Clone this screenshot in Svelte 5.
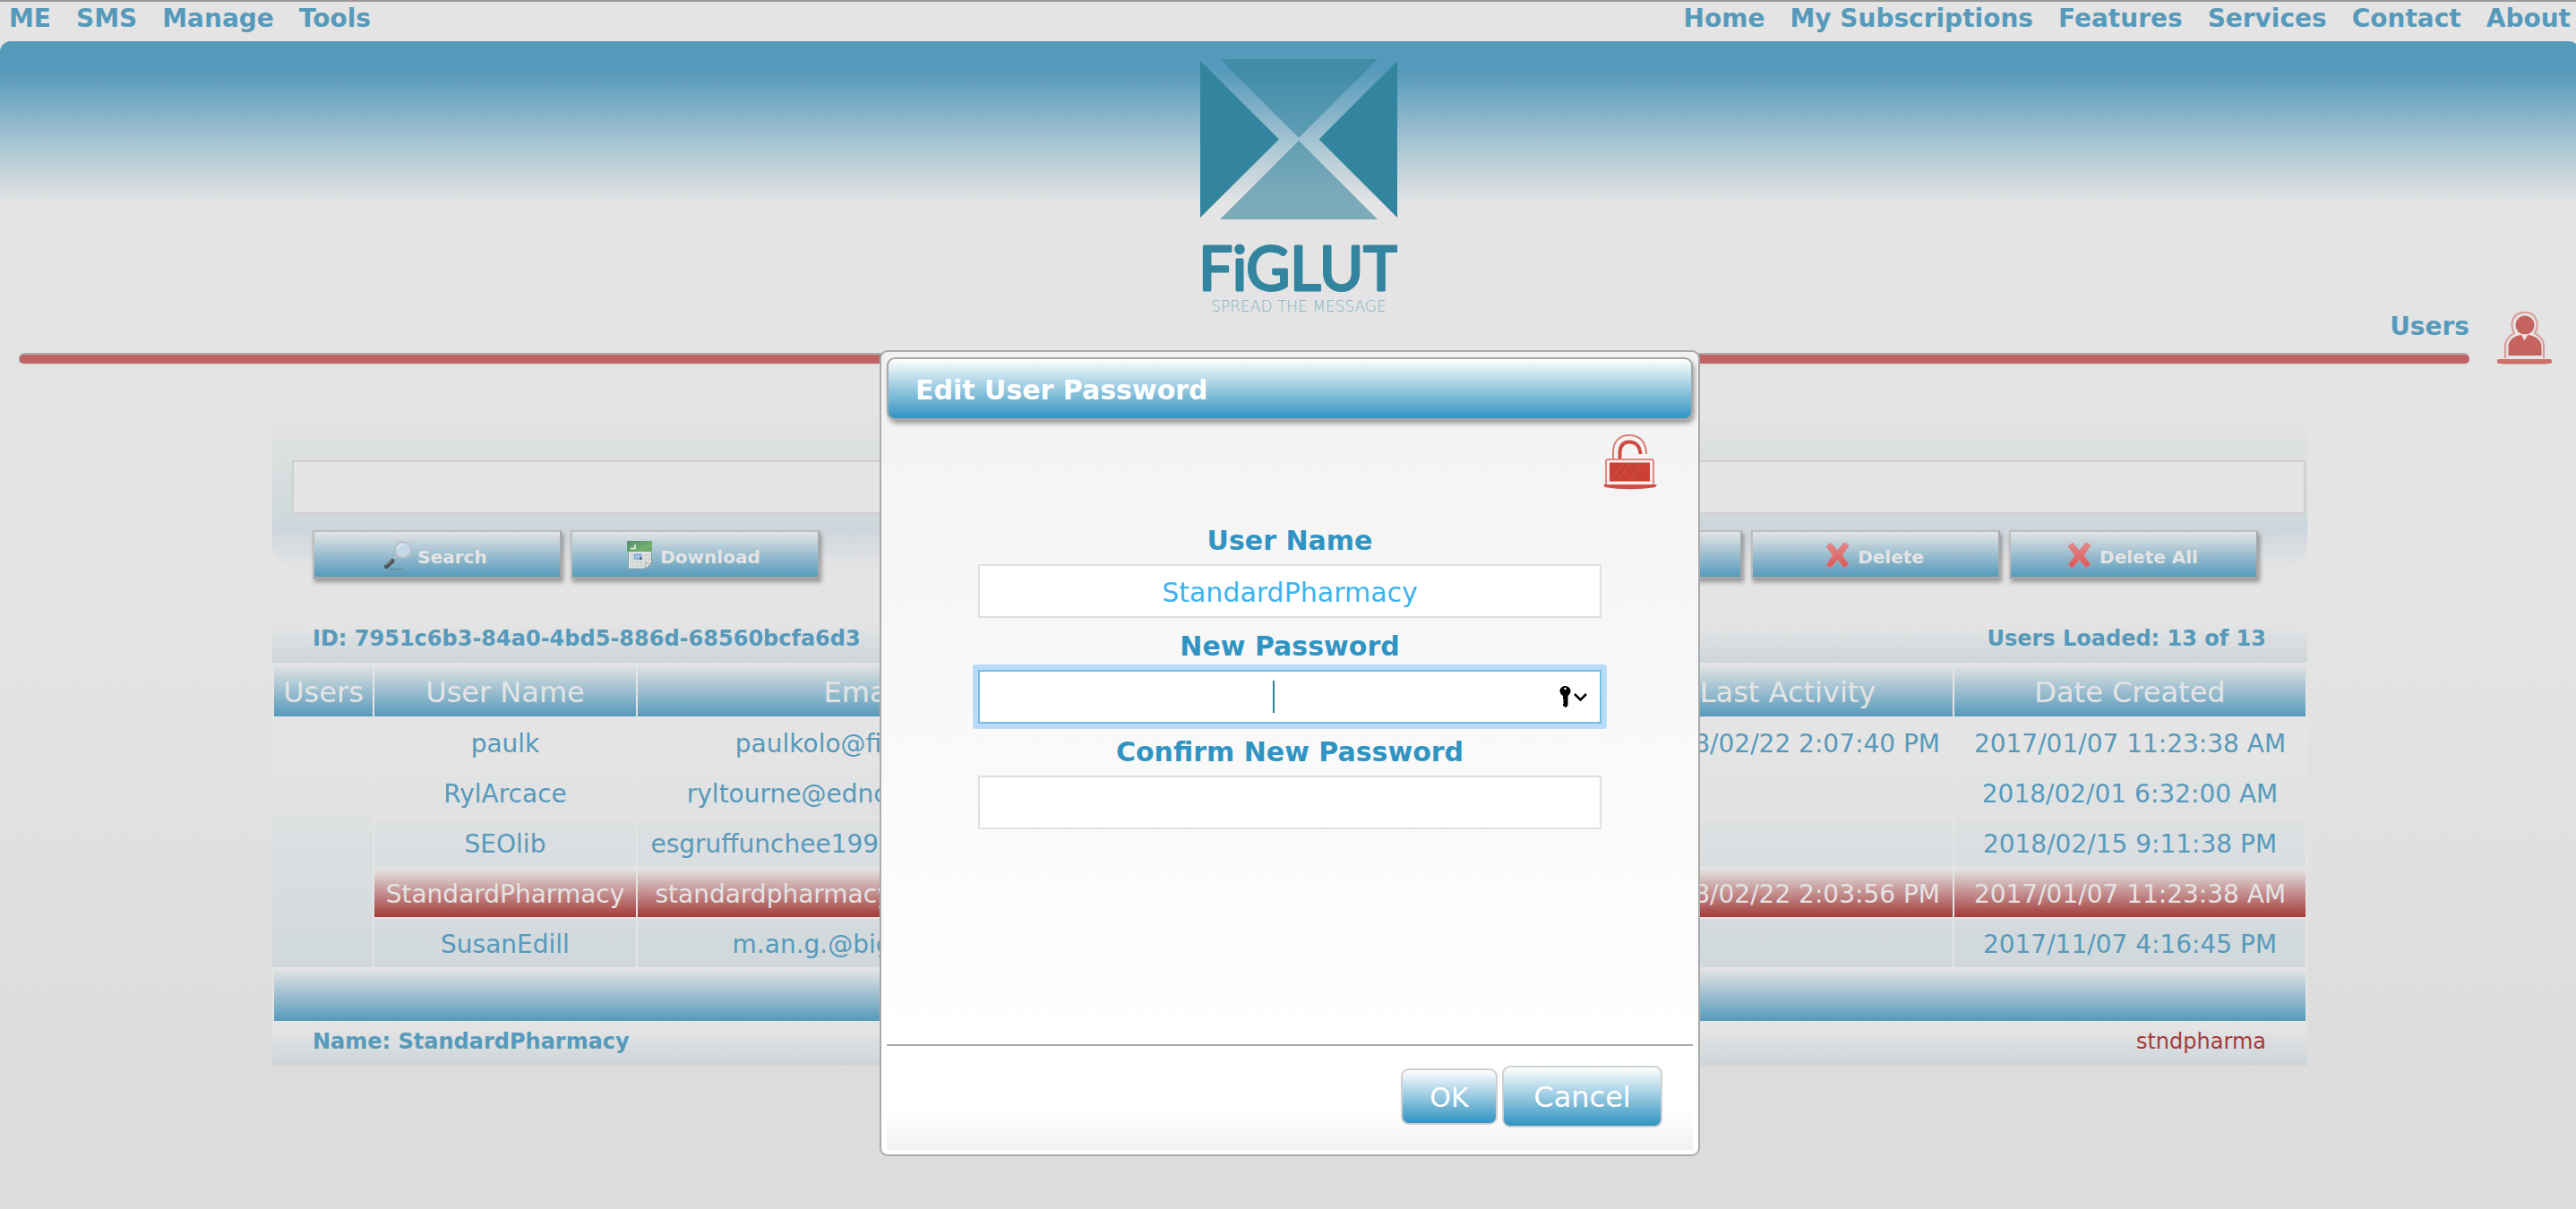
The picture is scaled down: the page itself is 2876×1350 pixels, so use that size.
<script>
  const leftLinks = ['ME', 'SMS', 'Manage', 'Tools'];
  const rightLinks = ['Home', 'My Subscriptions', 'Features', 'Services', 'Contact', 'About'];
  const rows = [
    { name: 'paulk', email: 'paulkolo@figlut.com', last: '2018/02/22 2:07:40 PM', created: '2017/01/07 11:23:38 AM' },
    { name: 'RylArcace', email: 'ryltourne@ednc-emails.com', last: '', created: '2018/02/01 6:32:00 AM' },
    { name: 'SEOlib', email: 'esgruffunchee1990@hotmail.com', last: '', created: '2018/02/15 9:11:38 PM' },
    { name: 'StandardPharmacy', email: 'standardpharmacy@outlook.com', last: '2018/02/22 2:03:56 PM', created: '2017/01/07 11:23:38 AM', selected: true },
    { name: 'SusanEdill', email: 'm.an.g.@bigmail.net', last: '', created: '2017/11/07 4:16:45 PM' }
  ];
  let userName = $state('StandardPharmacy');
  let password = $state('');
  let confirmation = $state('');
</script>

{#snippet cross()}
  <svg class="icon" viewBox="0 0 32 32" aria-hidden="true">
    <defs>
      <linearGradient id="crossFill" x1="0" y1="0" x2="0" y2="1">
        <stop offset="0" stop-color="#e58888" />
        <stop offset="1" stop-color="#d95757" />
      </linearGradient>
    </defs>
    <path d="M3 6 L8 2.5 L15.500 11 L23 2 L28 5 L20.500 16 L28 26 L23 30 L15.500 21 L8 30 L3 27 L10.500 16 Z" fill="url(#crossFill)" stroke="#d98080" stroke-linejoin="round" />
  </svg>
{/snippet}

<div class="page">
  <nav class="menu">
    <div class="links">
      {#each leftLinks as link}<a href="#{link}">{link}</a>{/each}
    </div>
    <div class="links">
      {#each rightLinks as link}<a href="#{link}">{link}</a>{/each}
    </div>
  </nav>

  <header class="banner">
    <svg class="logo" viewBox="0 0 220 292" role="img" aria-label="FiGLUT, spread the message">
      <defs>
        <linearGradient id="top" x1="0" y1="0" x2="0" y2="1">
          <stop offset="0.150" stop-color="#418ca9" />
          <stop offset="1" stop-color="#609eb4" />
        </linearGradient>
        <linearGradient id="bottom" x1="0" y1="0" x2="0" y2="1">
          <stop offset="0" stop-color="#609eb2" />
          <stop offset="0.600" stop-color="#79a9ba" />
          <stop offset="1" stop-color="#7caab9" />
        </linearGradient>
      </defs>
      <path d="M0 2 L88 89.500 L0 177 Z M220 2 L132.500 89.500 L220 177 Z" fill="#33859f" />
      <path d="M22 0 H198 L110 88 Z" fill="url(#top)" />
      <path d="M110 91 L198 179 H22 Z" fill="url(#bottom)" />
      <text class="brand" x="110" y="258" text-anchor="middle">FiGLUT</text>
      <text class="tagline" x="110" y="282" text-anchor="middle">SPREAD THE MESSAGE</text>
    </svg>
    <div class="heading">
      <div class="heading-text">
        <h1>Users</h1>
        <div class="rule"></div>
      </div>
      <svg class="person" viewBox="0 0 61 60" aria-hidden="true">
        <path d="M9 52 V38 C9 31 14 27 19 24 C15 17 16 10 19 6 C25 -1 37 -1 42 6 C46 12 45 19 42 24 C48 28 52 31 52 38 V52" fill="none" stroke="#d59a96" stroke-width="2" />
        <circle cx="31" cy="15" r="10.500" fill="#c5645e" />
        <path d="M12.500 49 V39 C13 31 19 27 27 26 L30.500 32 L34 26 C43 27 49 31 49.500 39 V49 Z" fill="#c5645e" />
        <path d="M27 26 L29 25 H33 L34 26 L30.500 32 Z" fill="#eadada" />
        <rect x="0" y="53" width="61" height="5" rx="2" fill="#cb706b" />
        <path d="M6 58.500 H55" stroke="#d9a4a1" />
      </svg>
    </div>
  </header>

  <main>
    <section class="search-panel">
      <input class="search" type="text" aria-label="Search users" />
      <div class="actions">
        <div class="group">
          <button class="action">
            <svg class="icon" viewBox="0 0 32 32" aria-hidden="true">
              <path d="M6 31.500 H22" stroke="#5e8797" />
              <path d="M13 19 L16 16" stroke="#b8bcc0" stroke-width="3" />
              <path d="M3.500 28.500 L10 22.500" stroke="#4c5358" stroke-width="5" stroke-linecap="round" />
              <path d="M3 27 L9 21.500" stroke="#8b8f92" stroke-width="1.500" />
              <circle cx="22" cy="10" r="9" fill="#c5d6e5" stroke="#b4bec6" stroke-width="1.500" />
              <path d="M16 9 C17 5 20 4 23 4" fill="none" stroke="#e2eaf0" stroke-width="2" />
            </svg>
            <span>Search</span>
          </button>
          <button class="action">
            <svg class="icon" viewBox="0 0 32 32" aria-hidden="true">
              <defs>
                <linearGradient id="sheet" x1="0" y1="0" x2="1" y2="1">
                  <stop offset="0" stop-color="#4f8d70" />
                  <stop offset="0.700" stop-color="#74b069" />
                  <stop offset="1" stop-color="#6da667" />
                </linearGradient>
              </defs>
              <path d="M2.500 2 H28.500 V25 L22 31 H2.500 Z" fill="#e2e3e3" stroke="#7f9ca5" />
              <rect x="1" y="0" width="28" height="12" fill="url(#sheet)" />
              <path d="M5 8.500 H10 V4" fill="none" stroke="#d5e2d8" stroke-width="2" />
              <path d="M5 16 H27 M5 20 H27 M5 24 H23 M5 28 H20 M7 14 V29 M12 14 V29 M17 14 V29 M22 14 V27 M26 14 V22" stroke="#c6cacb" />
              <rect x="9.500" y="15" width="7" height="5" fill="#a9c5e8" stroke="#7ba6de" stroke-width="1.500" />
              <path d="M15 18 H18 V21 H15 Z" fill="#59708f" />
              <path d="M21.500 31 L22 25 H28.500 Z" fill="#efefef" stroke="#949ea2" />
            </svg>
            <span>Download</span>
          </button>
        </div>
        <div class="group">
          <button class="action" aria-label="Edit"></button>
          <button class="action">{@render cross()}<span>Delete</span></button>
          <button class="action">{@render cross()}<span>Delete All</span></button>
        </div>
      </div>
    </section>

    <div class="info">
      <strong>ID: 7951c6b3-84a0-4bd5-886d-68560bcfa6d3</strong>
      <strong>Users Loaded: 13 of 13</strong>
    </div>

    <table>
      <colgroup>
        <col class="c-group" /><col class="c-name" /><col class="c-email" /><col /><col class="c-last" /><col class="c-created" />
      </colgroup>
      <thead>
        <tr>
          <th>Users</th><th>User Name</th><th>Email</th><th></th><th>Last Activity</th><th>Date Created</th>
        </tr>
      </thead>
      <tbody>
        {#each rows as row, i}
          <tr class:selected={row.selected}>
            {#if i === 0}<td class="side" rowspan={rows.length}></td>{/if}
            <td>{row.name}</td><td>{row.email}</td><td></td><td class="last">{row.last}</td><td>{row.created}</td>
          </tr>
        {/each}
      </tbody>
      <tfoot>
        <tr><td colspan="6"></td></tr>
      </tfoot>
    </table>

    <div class="info">
      <strong>Name: StandardPharmacy</strong>
      <span class="alias">stndpharma</span>
    </div>
  </main>

  <div class="layer">
    <div class="dialog" role="dialog" aria-labelledby="dialog-title">
      <h2 id="dialog-title">Edit User Password</h2>
      <svg class="lock" viewBox="0 0 60 62" aria-hidden="true">
        <path d="M11 28 V20 C11 7 19 1 29 1 C40 1 48 8 48 22" fill="none" stroke="#d97f78" stroke-width="2" />
        <path d="M18.500 28 V20 C19 12 23 8.500 29 8.500 C36 8.500 41 13 41.500 22" fill="none" stroke="#cf4c43" stroke-width="4" />
        <rect x="3" y="28" width="53" height="29" rx="2" fill="#fbeeed" stroke="#dd8983" stroke-width="2" />
        <rect x="7" y="31.500" width="45" height="21" fill="#cb4036" />
        <path d="M9 51 L22 33 M16 51 L30 33 M30 51 L42 35" stroke="#d2554c" />
        <path d="M0 56 H60 L58 59 C40 62 20 62 2 59 Z" fill="#cf4f47" />
      </svg>
      <form class="fields" onsubmit={(e) => e.preventDefault()}>
        <div class="field">
          <label for="user">User Name</label>
          <input id="user" type="text" bind:value={userName} />
        </div>
        <div class="field">
          <label for="new">New Password</label>
          <div class="focused">
            <input id="new" type="password" bind:value={password} />
            <span class="caret"></span>
            <svg class="key" viewBox="0 0 32 26" aria-hidden="true">
              <path d="M6.500 1 C10 1 12.500 3.500 12.500 6.500 C12.500 9 11 11 9.500 12 V23 L7 25 L4 23 V21 L5 20 L4 18.500 L5 17 L4 15.500 V12 C2 11 0.500 9 0.500 6.500 C0.500 3.500 3 1 6.500 1 Z" />
              <circle cx="6.500" cy="4" r="1.300" fill="#fff" />
              <path d="M17 10 L23.500 16.500 L30 10" fill="none" stroke="#000" stroke-width="2.500" />
            </svg>
          </div>
        </div>
        <div class="field">
          <label for="confirm">Confirm New Password</label>
          <input id="confirm" type="password" bind:value={confirmation} />
        </div>
      </form>
      <footer>
        <button class="ok">OK</button>
        <button class="cancel">Cancel</button>
      </footer>
    </div>
  </div>
</div>

<style>
  :global(body) {
    overflow-x: hidden;
  }
  * {
    box-sizing: border-box;
  }
  .page {
    position: relative;
    min-height: 100vh;
    margin-right: -4px;
    padding-bottom: 40px;
    background: linear-gradient(#e4e4e4 50%, #dcdcdc 90%);
    color: #569abb;
    font-family: Verdana, 'DejaVu Sans', sans-serif;
    font-size: 28px;
  }
  button,
  input {
    font-family: inherit;
  }
  .menu {
    display: flex;
    justify-content: space-between;
    padding: 0 10px 6px;
    border-top: 2px solid #999;
    font-weight: bold;
    line-height: 38px;
  }
  .links {
    display: flex;
    gap: 28px;
  }
  .links a {
    color: inherit;
    text-decoration: none;
  }
  .banner {
    padding: 20px 31px 0 21px;
    border-radius: 12px 12px 0 0;
    background: linear-gradient(#569abb 0, #569abb 33px, #82b1c8 78px, #abc7d3 118px, #e4e4e4 180px);
  }
  .logo {
    display: block;
    width: 220px;
    height: 292px;
    margin: 0 auto;
    transform: translateX(15px);
  }
  .brand {
    font-family: Lato, sans-serif;
    font-size: 67px;
    fill: #33859f;
    stroke: #33859f;
    stroke-width: 3px;
    stroke-linejoin: round;
  }
  .tagline {
    font-family: 'DejaVu Sans', sans-serif;
    font-size: 17px;
    font-weight: 200;
    fill: #86b3c3;
  }
  .heading {
    display: flex;
    align-items: flex-end;
    gap: 31px;
    margin-top: -12px;
  }
  .heading-text {
    flex: 1;
  }
  h1 {
    margin: 0 0 10px;
    font-size: 28px;
    line-height: 38px;
    text-align: right;
  }
  .rule {
    height: 14px;
    border: solid #adadad;
    border-width: 2px 0 0 1px;
    border-bottom: 2px solid #dcdcdc;
    border-radius: 6px;
    background: #c16365;
  }
  .person {
    width: 61px;
    height: 60px;
  }
  main {
    width: 94%;
    max-width: 2272px;
    margin: 52px auto 0;
  }
  .search-panel {
    height: 174px;
    margin-bottom: 56px;
    padding-top: 54px;
    border-radius: 24px;
    background: linear-gradient(#e4e4e4, #cfd8da 68%, #cdd5dc 74%, #e4e4e4);
  }
  .search {
    display: block;
    width: calc(100% - 24px);
    height: 60px;
    margin: 0 2px 18px 22px;
    border: 2px solid #cfcfcf;
    background: #e4e4e4;
  }
  .actions {
    display: flex;
    justify-content: space-between;
    padding: 0 55px 0 45px;
  }
  .group {
    display: flex;
    gap: 10px;
  }
  .action {
    display: flex;
    justify-content: center;
    align-items: flex-end;
    gap: 6px;
    width: 278px;
    height: 54px;
    padding: 0 4px 8px 0;
    border: 2px solid;
    border-color: #bebebe #a8a8a8 #a8a8a8 #bebebe;
    background: linear-gradient(#e4e4e4, #569abb);
    box-shadow: 2px 4px 5px rgb(0 0 0 / 35%);
    color: #e4e4e4;
    font-size: 20px;
    font-weight: bold;
    line-height: 28px;
  }
  .icon {
    width: 32px;
    height: 32px;
  }
  .info {
    display: flex;
    justify-content: space-between;
    padding: 0 46px 4px 45px;
    background: linear-gradient(#e4e4e4 15%, #cdd5da);
    font-size: 24px;
    line-height: 46px;
  }
  .alias {
    color: #a53a3a;
  }
  table {
    width: 100%;
    table-layout: fixed;
    border-spacing: 0;
  }
  .c-group {
    width: 112px;
  }
  .c-name {
    width: 294px;
  }
  .c-email {
    width: 506px;
  }
  .c-last {
    width: 370px;
  }
  .c-created {
    width: 396px;
  }
  th,
  td {
    height: 56px;
    padding: 3px 0 0;
    border: 0 solid #e4e4e4;
    border-width: 2px 0 0 2px;
    text-align: center;
    line-height: 36px;
    white-space: nowrap;
  }
  th:last-child,
  td:last-child {
    border-right-width: 2px;
  }
  th {
    height: 60px;
    background: linear-gradient(#e4e4e4, #569abb);
    color: #e4e4e4;
    font-size: 32px;
    font-weight: normal;
  }
  tbody {
    background: linear-gradient(#e4e4e4 15%, #d0d8dc);
  }
  td.side {
    border-color: transparent;
  }
  td.last {
    padding-right: 14px;
    text-align: right;
  }
  .selected td {
    background: linear-gradient(#e4e4e4, #a53a3a);
    color: #e4e4e4;
  }
  tfoot td {
    height: 60px;
    background: linear-gradient(#e4e4e4, #569abb);
  }
  .layer {
    position: absolute;
    inset: 391px 0 auto;
    display: flex;
    justify-content: center;
  }
  .dialog {
    display: flex;
    flex-direction: column;
    width: 916px;
    min-height: 900px;
    padding: 6px 6px 5px;
    border: 2px solid #aaa;
    border-radius: 9px;
    background: linear-gradient(#f2f2f2, #fff 88%);
    color: #3094c2;
  }
  h2 {
    margin: 0;
    padding: 3px 30px 0;
    border: 2px solid #a8a8a8;
    border-radius: 9px;
    background: linear-gradient(#fff, #3094c2);
    box-shadow: 2px 4px 5px rgb(0 0 0 / 35%);
    color: #fff;
    font-size: 30px;
    line-height: 63px;
  }
  .lock {
    align-self: flex-end;
    width: 60px;
    height: 62px;
    margin: 16px 40px 37px 0;
  }
  .fields {
    display: flex;
    flex-direction: column;
    gap: 12px;
    padding: 0 102px;
  }
  .field {
    display: flex;
    flex-direction: column;
    gap: 6px;
  }
  label {
    font-size: 30px;
    font-weight: bold;
    line-height: 40px;
    text-align: center;
  }
  .field input {
    display: block;
    width: 100%;
    height: 60px;
    padding: 2px 0 0;
    border: 2px solid #e0e0e0;
    background: #fff;
    color: #3db4ec;
    font-size: 30px;
    text-align: center;
    outline: none;
  }
  .focused {
    position: relative;
    border-radius: 1px;
    box-shadow: 0 0 0 6px #b8dcfa;
  }
  .field .focused input {
    border-color: #78bddb;
  }
  .caret {
    position: absolute;
    top: 12px;
    left: 329px;
    width: 2px;
    height: 36px;
    background: #2f7f9f;
  }
  .key {
    position: absolute;
    top: 17px;
    right: 15px;
    width: 32px;
    height: 26px;
  }
  footer {
    display: flex;
    justify-content: flex-end;
    align-items: center;
    gap: 5px;
    height: 118px;
    margin-top: auto;
    padding: 0 34px 4px 0;
    border-top: 2px solid #aaa;
    background: linear-gradient(#fff 60%, #f1f1f1);
  }
  .ok,
  .cancel {
    padding: 2px 0 0;
    border: 2px solid #d0d0d0;
    border-radius: 9px;
    background: linear-gradient(#fff, #3094c2);
    color: #fff;
  }
  .ok {
    width: 108px;
    height: 63px;
    font-size: 30px;
  }
  .cancel {
    width: 179px;
    height: 69px;
    font-size: 32px;
  }
</style>
